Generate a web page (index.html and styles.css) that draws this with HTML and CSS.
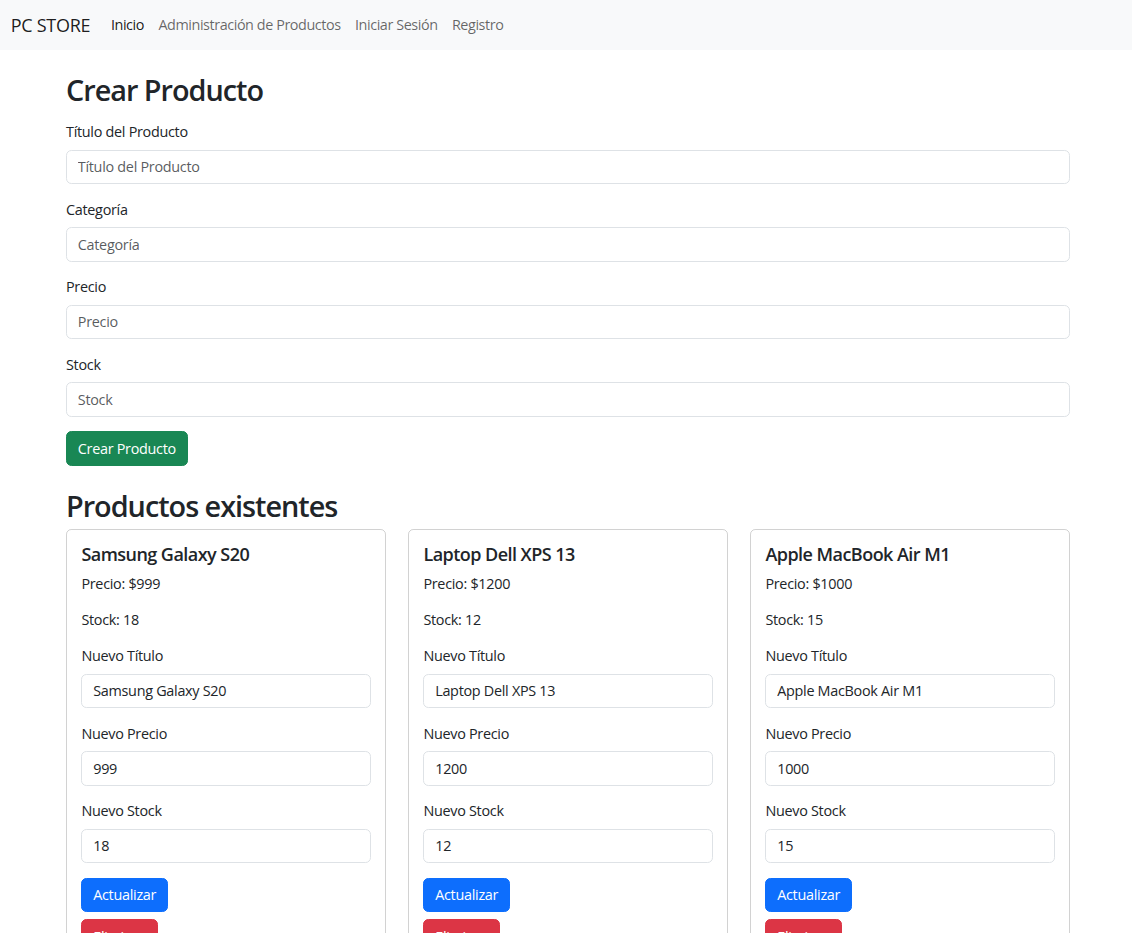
FILE: index.html
```html
<!DOCTYPE html>
<html lang="es">
<head>
<meta charset="utf-8">
<title>PC STORE</title>
<link rel="stylesheet" href="styles.css">
</head>
<body>
<nav class="navbar">
  <a class="brand" href="#">PC STORE</a>
  <ul class="nav">
    <li><a class="nav-link active" href="#">Inicio</a></li>
    <li><a class="nav-link" href="#">Administración de Productos</a></li>
    <li><a class="nav-link" href="#">Iniciar Sesión</a></li>
    <li><a class="nav-link" href="#">Registro</a></li>
  </ul>
</nav>
<main class="container">
  <h2 class="page-title">Crear Producto</h2>
  <form class="create-form">
    <div class="field">
      <label class="form-label">Título del Producto</label>
      <input class="form-control" type="text" placeholder="Título del Producto">
    </div>
    <div class="field">
      <label class="form-label">Categoría</label>
      <input class="form-control" type="text" placeholder="Categoría">
    </div>
    <div class="field">
      <label class="form-label">Precio</label>
      <input class="form-control" type="text" placeholder="Precio">
    </div>
    <div class="field">
      <label class="form-label">Stock</label>
      <input class="form-control" type="text" placeholder="Stock">
    </div>
    <button class="btn btn-success" type="button">Crear Producto</button>
  </form>

  <h2 class="section-title">Productos existentes</h2>
  <div class="cards">
    <div class="card">
      <h5 class="card-title">Samsung Galaxy S20</h5>
      <p>Precio: $999</p>
      <p>Stock: 18</p>
      <div class="field">
        <label class="form-label">Nuevo Título</label>
        <input class="form-control" type="text" value="Samsung Galaxy S20">
      </div>
      <div class="field">
        <label class="form-label">Nuevo Precio</label>
        <input class="form-control" type="text" value="999">
      </div>
      <div class="field">
        <label class="form-label">Nuevo Stock</label>
        <input class="form-control" type="text" value="18">
      </div>
      <button class="btn btn-primary" type="button">Actualizar</button>
      <button class="btn btn-danger" type="button">Eliminar</button>
    </div>
    <div class="card">
      <h5 class="card-title">Laptop Dell XPS 13</h5>
      <p>Precio: $1200</p>
      <p>Stock: 12</p>
      <div class="field">
        <label class="form-label">Nuevo Título</label>
        <input class="form-control" type="text" value="Laptop Dell XPS 13">
      </div>
      <div class="field">
        <label class="form-label">Nuevo Precio</label>
        <input class="form-control" type="text" value="1200">
      </div>
      <div class="field">
        <label class="form-label">Nuevo Stock</label>
        <input class="form-control" type="text" value="12">
      </div>
      <button class="btn btn-primary" type="button">Actualizar</button>
      <button class="btn btn-danger" type="button">Eliminar</button>
    </div>
    <div class="card">
      <h5 class="card-title">Apple MacBook Air M1</h5>
      <p>Precio: $1000</p>
      <p>Stock: 15</p>
      <div class="field">
        <label class="form-label">Nuevo Título</label>
        <input class="form-control" type="text" value="Apple MacBook Air M1">
      </div>
      <div class="field">
        <label class="form-label">Nuevo Precio</label>
        <input class="form-control" type="text" value="1000">
      </div>
      <div class="field">
        <label class="form-label">Nuevo Stock</label>
        <input class="form-control" type="text" value="15">
      </div>
      <button class="btn btn-primary" type="button">Actualizar</button>
      <button class="btn btn-danger" type="button">Eliminar</button>
    </div>
  </div>
</main>
</body>
</html>
```
FILE: styles.css
```css
* { box-sizing: border-box; }
html, body { margin: 0; padding: 0; }
body {
  font-family: "Open Sans", "Noto Sans", sans-serif;
  font-size: 14.4px;
  line-height: 1.5;
  letter-spacing: -0.02em;
  color: #212529;
  background: #fff;
}

.navbar {
  display: flex;
  align-items: center;
  height: 50px;
  padding: 0 10.8px;
  background: #f8f9fa;
}
.brand {
  font-size: 18px;
  color: rgba(0,0,0,.9);
  text-decoration: none;
  margin-right: 13.5px;
  padding: 4.5px 0;
}
.nav {
  display: flex;
  list-style: none;
  margin: 0;
  padding: 0;
}
.nav-link {
  display: block;
  padding: 7.2px 7.2px;
  color: rgba(0,0,0,.6);
  text-decoration: none;
  letter-spacing: -0.03em;
}
.nav-link.active { color: rgba(0,0,0,.9); }

.container {
  padding: 0 62px 40px 66px;
}
.page-title, .section-title {
  font-size: 28.8px;
  font-weight: 600;
  line-height: 1.2;
  letter-spacing: -0.035em;
  margin: 0;
}
.page-title { padding-top: 22.5px; margin-bottom: 14px; }
.section-title { margin-top: 23px; margin-bottom: 6px; }

.field { margin-bottom: 14.4px; }
.form-label {
  display: block;
  margin-bottom: 7.2px;
}
.form-control {
  display: block;
  width: 100%;
  padding: 5.4px 10.8px;
  font-family: inherit;
  font-size: 14.4px;
  line-height: 1.5;
  letter-spacing: inherit;
  color: #212529;
  background: #fff;
  border: 0.9px solid #dee2e6;
  border-radius: 5.4px;
  outline: none;
}
.form-control::placeholder { color: rgba(33,37,41,.75); }

.btn {
  display: inline-block;
  padding: 5.4px 10.8px;
  font-family: inherit;
  font-size: 14.4px;
  line-height: 1.5;
  letter-spacing: inherit;
  color: #fff;
  border: 0.9px solid transparent;
  border-radius: 5.4px;
  cursor: pointer;
}
.btn-success { background: #198754; border-color: #198754; }
.btn-primary { background: #0d6efd; border-color: #0d6efd; display: block; }
.btn-danger { background: #dc3545; border-color: #dc3545; display: block; margin-top: 7.2px; }

.cards {
  display: grid;
  grid-template-columns: repeat(3, 1fr);
  gap: 22px;
}
.card {
  border: 1px solid rgba(0,0,0,.175);
  border-radius: 5.4px;
  padding: 14px 14.4px 14.4px;
}
.card-title {
  font-size: 18px;
  font-weight: 600;
  line-height: 1.2;
  letter-spacing: -0.03em;
  margin: 0 0 7.2px;
}
.card p { margin: 0 0 14.4px; }
```
